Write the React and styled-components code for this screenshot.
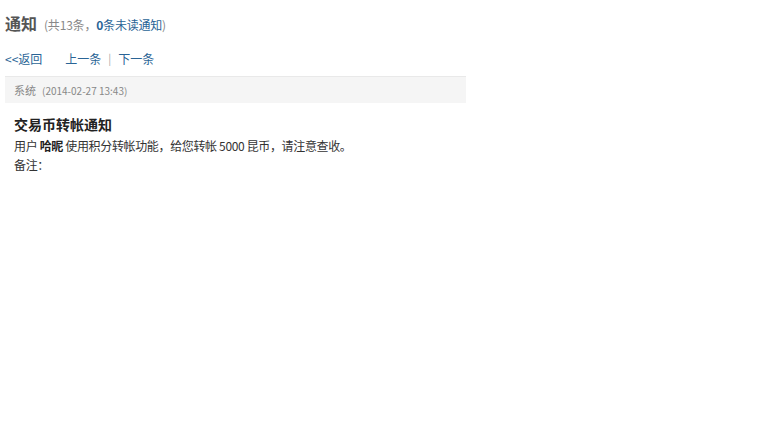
import React from "react";
import styled, { createGlobalStyle } from "styled-components";

const Global = createGlobalStyle`
  html, body { margin: 0; padding: 0; background: #fff; }
  body { font-family: "Noto Sans CJK SC", "Noto Sans", sans-serif; color: #333; }
`;

const Page = styled.div`
  padding: 11px 5px 0 5px;
  width: 461px;
`;

const TitleRow = styled.div`
  display: flex;
  align-items: baseline;
  gap: 7px;
  height: 24px;
`;

const Title = styled.h2`
  margin: 0;
  font-size: 16px;
  font-weight: bold;
  color: #555;
  line-height: 24px;
`;

const Count = styled.span`
  font-size: 12px;
  color: #888;
  letter-spacing: -0.2px;
`;

const Unread = styled.a`
  color: #2a6496;
  text-decoration: none;
  b { font-weight: bold; }
`;

const NavRow = styled.div`
  display: flex;
  align-items: center;
  height: 20px;
  margin-top: 13px;
  font-size: 12px;
`;

const NavLink = styled.a`
  color: #2a6496;
  text-decoration: none;
  margin-left: ${(p) => p.$ml || 0}px;
`;

const Sep = styled.span`
  color: #aaa;
  margin: 0 7px;
  font-size: 11px;
`;

const MetaBar = styled.div`
  margin-top: 8px;
  height: 26px;
  background: #f5f5f5;
  border-top: 1px solid #e9e9e9;
  display: flex;
  align-items: center;
  padding-left: 9px;
  gap: 6px;
`;

const Sender = styled.span`
  font-size: 11px;
  color: #888;
`;

const Time = styled.span`
  font-size: 10px;
  color: #888;
`;

const Body = styled.div`
  padding: 11px 9px 0;
`;

const MsgTitle = styled.h3`
  margin: 0;
  font-size: 14px;
  font-weight: bold;
  color: #222;
  line-height: 20px;
`;

const Line = styled.p`
  margin: 0;
  font-size: 12px;
  color: #333;
  line-height: 19px;
  letter-spacing: -0.35px;
  margin-top: ${(p) => p.$mt || 0}px;
  b { font-weight: bold; color: #222; }
`;

export default function App() {
  return (
    <>
      <Global />
      <Page>
        <TitleRow>
          <Title>通知</Title>
          <Count>
            (共13条，<Unread href="#"><b>0</b>条未读通知</Unread>)
          </Count>
        </TitleRow>
        <NavRow>
          <NavLink href="#">&lt;&lt;返回</NavLink>
          <NavLink href="#" $ml={23}>上一条</NavLink>
          <Sep>|</Sep>
          <NavLink href="#">下一条</NavLink>
        </NavRow>
        <MetaBar>
          <Sender>系统</Sender>
          <Time>(2014-02-27 13:43)</Time>
        </MetaBar>
        <Body>
          <MsgTitle>交易币转帐通知</MsgTitle>
          <Line $mt={2}>
            用户 <b>哈昵</b> 使用积分转帐功能，给您转帐 5000 昆币，请注意查收。
          </Line>
          <Line>备注：</Line>
        </Body>
      </Page>
    </>
  );
}
